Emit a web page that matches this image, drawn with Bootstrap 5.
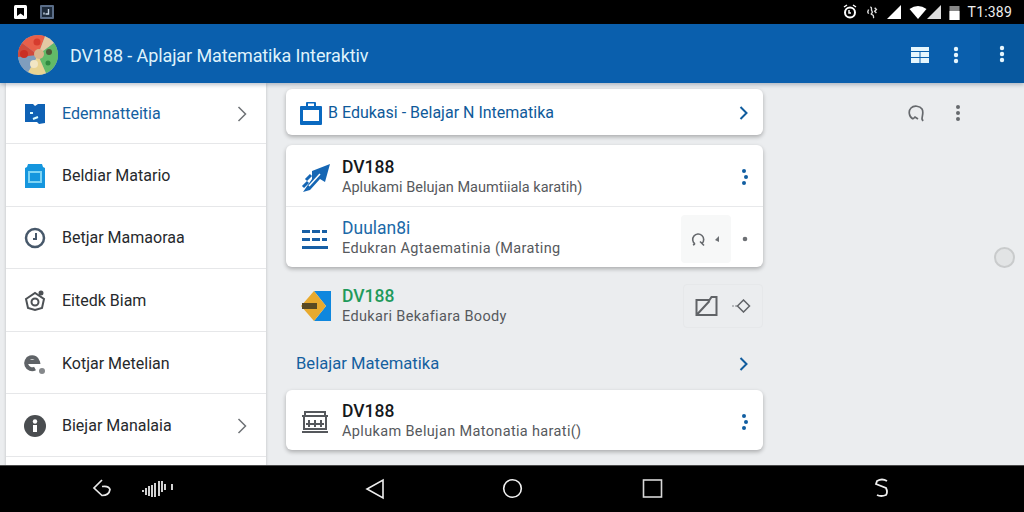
<!DOCTYPE html>
<html lang="en">
<head>
    <meta charset="UTF-8">
    <meta name="viewport" content="width=device-width, initial-scale=1.0">
    <title>DV188</title>
    <link rel="stylesheet" href="https://cdn.jsdelivr.net/npm/bootstrap@5.3.0/dist/css/bootstrap.min.css">
    <script src="https://cdn.jsdelivr.net/npm/bootstrap@5.3.0/dist/js/bootstrap.bundle.min.js"></script>
    <style>
        html, body { height: 100%; }
        body { width: 1024px; height: 512px; overflow: hidden; background: #000; font-family: Roboto, "Liberation Sans", sans-serif; }
        .phone-status { height: 24px; background: #000; padding: 0 12px 0 14px; }
        .status-left { gap: 13px; }
        .status-time { color: #eee; font-size: 14px; line-height: 24px; letter-spacing: .2px; }
        .app-bar { height: 59px; background: #0a5fad; position: relative; z-index: 2; box-shadow: 0 2px 4px rgba(40, 60, 90, .3); }
        .app-title { color: #dff2fb; font-size: 18px; margin-left: 12px; letter-spacing: -.1px; white-space: nowrap; }
        .app-left { padding-left: 18px; padding-top: 3px; }
        .app-tools { gap: 24px; padding-right: 21px; padding-top: 2px; }
        .app-end { width: 44px; background: #07589f; }
        .screen-body { height: 382px; background: #ebedef; overflow: hidden; }
        .side-list { width: 260px; margin-left: 6px; flex: none; border-radius: 0; background: #fff; box-shadow: 0 0 3px rgba(0, 0, 0, .2); align-self: flex-start; }
        .side-list .list-group-item { height: 62.6px; padding: 2px 19px 0 18px; border-color: #e6e7e9; border-left: 0; border-right: 0; color: #26292c; font-size: 16px; display: flex; align-items: center; }
        .side-list .list-group-item:first-child { height: 61px; border-top: 0; border-radius: 0; color: #14609f; }
        .side-icon { width: 24px; height: 24px; margin-left: -1px; margin-right: 15px; flex: none; }
        .side-arrow { margin-left: auto; }
        .main-col { width: 477px; margin-left: 20px; padding-top: 6px; flex: none; }
        .info-card { border: 0; border-radius: 6px; box-shadow: 0 2px 4px rgba(0, 0, 0, .28); }
        .head-card { height: 46px; padding: 2px 15px 0 14px; margin-bottom: 10px; color: #0f5a9a; font-size: 16px; }
        .head-card svg:first-child { margin-right: 6px; }
        .row-item { height: 61px; padding: 3px 15px 0 14px; }
        .row-item + .row-item { border-top: 1px solid #e8e9eb; }
        .row-icon { width: 32px; height: 32px; margin-right: 10px; flex: none; }
        .row-title { font-size: 17.5px; line-height: 19px; color: #15181b; font-weight: 500; }
        .row-sub { font-size: 14.5px; line-height: 19px; margin-top: 1px; color: #56595d; white-space: nowrap; }
        .title-blue { color: #1b69a8; font-weight: 400; }
        .title-green { color: #1f9a5b; }
        .sub-wide { letter-spacing: .35px; }
        .action-box { width: 50px; height: 48px; margin-right: 11px; background: #f7f8f8; border-radius: 4px; gap: 9px; }
        .flat-row { height: 62px; margin-top: 8px; padding: 0 0 0 14px; }
        .flat-actions { width: 80px; height: 44px; border: 1px solid #e6e8ea; border-radius: 4px; gap: 13px; }
        .section-row { height: 32px; margin-top: 11px; padding: 0 15px 0 10px; color: #14609f; font-size: 16.6px; margin-bottom: 10px; }
        .card-last .row-item { height: 60px; }
        .far-col { flex: 1; position: relative; }
        .far-tools { position: absolute; top: 21px; left: 145px; gap: 30px; }
        .edge-knob { position: absolute; top: 164px; left: 231px; width: 21px; height: 21px; border-radius: 50%; background: #e2e4e5; border: 2px solid #c9cbcc; }
        .soft-keys { height: 47px; background: #000; border-top: 1px solid #4a4a4a; position: relative; }
        .soft-key { position: absolute; top: 12px; }
        .key-back { left: 92px; }
        .key-wave { left: 141px; }
        .key-tri { left: 365px; }
        .key-home { left: 502px; }
        .key-recent { left: 642px; }
        .key-swipe { left: 873px; }
    </style>
</head>
<body>

    <!-- status bar -->
    <div class="phone-status d-flex align-items-center justify-content-between">
        <div class="status-left d-flex align-items-center">
            <svg width="13" height="14" viewBox="0 0 13 14"><rect width="13" height="14" rx="1.5" fill="#fff"/><path d="M3 3h7v8L6.500 8.600 3 11z" fill="#000"/></svg>
            <svg width="14" height="14" viewBox="0 0 14 14"><rect width="14" height="14" rx="1" fill="#5a6d88"/><path d="M2 2h10v10H2z" fill="#1d2a3a"/><path d="M8.500 4v5H5.500M4 7.500v2" stroke="#c8d6e6" stroke-width="1.400" fill="none"/></svg>
        </div>
        <div class="d-flex align-items-center">
            <svg width="16" height="16" viewBox="0 0 16 16" fill="none" stroke="#fff" stroke-width="2"><circle cx="8" cy="8.500" r="5"/><path d="M2 3l3-2M14 3l-3-2M7 6v3h2" stroke-width="1.500"/></svg>
            <svg class="ms-2" width="13" height="15" viewBox="0 0 15 15" fill="none" stroke="#ddd" stroke-width="1.600"><path d="M5 1c3 1 0 3 2 5s-3 3 0 4 1 3 2 4M10 2l2 2-2 2 2 2M3 4l-1 3 1 2"/></svg>
            <svg class="ms-2" width="14" height="14" viewBox="0 0 14 14"><path d="M14 0v14H0z" fill="#fff"/></svg>
            <svg class="ms-2" width="18" height="13" viewBox="0 0 17 13"><path d="M0 3q8.500-6 17 0L8.500 13z" fill="#fff"/></svg>
            <svg width="14" height="14" viewBox="0 0 14 14"><path d="M14 0v14H0z" fill="#ddd"/></svg>
            <svg class="ms-2" width="11" height="15" viewBox="0 0 10 15"><path d="M0 1h10v14H0z" fill="#888"/><path d="M0 6h10v9H0z" fill="#fff"/></svg>
            <span class="status-time ms-2">T1:389</span>
        </div>
    </div>

    <!-- app bar -->
    <div class="app-bar d-flex align-items-center">
        <div class="app-left d-flex align-items-center flex-grow-1">
            <svg width="40" height="40" viewBox="0 0 40 40">
                <circle cx="20" cy="20" r="20" fill="#8fa6bf"/>
                <path d="M20 20L4 8A20 20 0 0 1 27 1.300z" fill="#e8604a"/>
                <path d="M20 20L27 1.300A20 20 0 0 1 36 8z" fill="#e3c9a4"/>
                <path d="M20 20L36 8A20 20 0 0 1 28 38.300z" fill="#62ba68"/>
                <path d="M20 20L28 38.300A20 20 0 0 1 10 37z" fill="#e9d492"/>
                <path d="M20 20L10 37A20 20 0 0 1 0 22z" fill="#7f9dbd"/>
                <path d="M20 20L0 22A20 20 0 0 1 4 8z" fill="#cf4a3c"/>
                <circle cx="21" cy="19" r="5" fill="#d9b58c"/>
                <circle cx="6" cy="19" r="4" fill="#c92f25"/>
                <circle cx="19" cy="7" r="3.500" fill="#d63c2e"/>
                <circle cx="31" cy="17" r="3" fill="#4c5a38"/>
                <circle cx="16" cy="29" r="4" fill="#f2e6c4"/>
                <circle cx="30" cy="28" r="2.500" fill="#2f8a40"/>
            </svg>
            <span class="app-title">DV188 - Aplajar Matematika Interaktiv</span>
        </div>
        <div class="app-tools d-flex align-items-center">
            <svg width="18" height="16" viewBox="0 0 18 16" fill="#e6f6fd"><path d="M0 0h18v4H0zM0 5h8.500v5H0zM9.500 5H18v5H9.500zM0 11h8.500v5H0zM9.500 11H18v5H9.500z"/></svg>
            <svg width="6" height="18" viewBox="0 0 6 18" fill="#e6f6fd"><circle cx="3" cy="3" r="2.200"/><circle cx="3" cy="9" r="2.200"/><circle cx="3" cy="15" r="2.200"/></svg>
        </div>
        <div class="app-end h-100 d-flex align-items-center justify-content-center">
            <svg width="6" height="18" viewBox="0 0 6 18" fill="#e6f6fd"><circle cx="3" cy="3" r="2.200"/><circle cx="3" cy="9" r="2.200"/><circle cx="3" cy="15" r="2.200"/></svg>
        </div>
    </div>

    <div class="screen-body d-flex">
        <!-- side menu -->
        <div class="side-list list-group">
            <div class="list-group-item">
                <svg class="side-icon" viewBox="0 0 24 24"><path d="M2 2h8l2 2 3-2h7v19l-6 1-2-2H2z" fill="#0f62b5"/><path d="M7 11h3M10 17l5-2" stroke="#dff" stroke-width="2" fill="none"/></svg>
                <span>Edemnatteitia</span>
                <svg class="side-arrow" width="10" height="16" viewBox="0 0 10 16" fill="none" stroke="#6e7276" stroke-width="1.500"><path d="M1.500 1l7 7-7 7"/></svg>
            </div>
            <div class="list-group-item">
                <svg class="side-icon" viewBox="0 0 24 24"><path d="M5 0h14l1 3 2 1v20H2V4l2-1z" fill="#1596de"/><rect x="5" y="7" width="14" height="12" fill="#7ed4f4"/><rect x="7" y="9" width="10" height="8" fill="#1596de"/></svg>
                <span>Beldiar Matario</span>
            </div>
            <div class="list-group-item">
                <svg class="side-icon" viewBox="0 0 24 24" fill="none" stroke="#47586a" stroke-width="2.500"><circle cx="12" cy="12" r="9"/><path d="M13 7v6h-3" stroke-width="2"/></svg>
                <span>Betjar Mamaoraa</span>
            </div>
            <div class="list-group-item">
                <svg class="side-icon" viewBox="0 0 24 24" fill="none" stroke="#4d5155" stroke-width="2"><path d="M3 10l9-6 9 6-2 9-7 2-7-2z"/><circle cx="12" cy="13" r="3.500"/><circle cx="18" cy="4" r="1.500" fill="#4d5155"/></svg>
                <span>Eitedk Biam</span>
            </div>
            <div class="list-group-item">
                <svg class="side-icon" viewBox="0 0 24 24" fill="none" stroke="#5f6367" stroke-width="4"><path d="M4 10h11a6 6 0 1 0-3 6.500"/><circle cx="19" cy="19" r="3" fill="#85888b" stroke="none"/></svg>
                <span>Kotjar Metelian</span>
            </div>
            <div class="list-group-item">
                <svg class="side-icon" viewBox="0 0 24 24"><circle cx="12" cy="12" r="11" fill="#4a4d50"/><circle cx="12" cy="7.500" r="2.200" fill="#fff"/><path d="M10 11h4v7h-4z" fill="#fff"/></svg>
                <span>Biejar Manalaia</span>
                <svg class="side-arrow" width="10" height="16" viewBox="0 0 10 16" fill="none" stroke="#6e7276" stroke-width="1.500"><path d="M1.500 1l7 7-7 7"/></svg>
            </div>
            <div class="list-group-item"></div>
        </div>

        <!-- cards -->
        <div class="main-col">
            <div class="card info-card head-card flex-row align-items-center justify-content-between">
                <div class="d-flex align-items-center">
                    <svg width="22" height="24" viewBox="0 0 22 24"><path d="M0 6q0-1 1-1h5V2q0-1 1-1h8q1 0 1 1v3h5q1 0 1 1v17q0 1-1 1H1q-1 0-1-1z" fill="#0a69c0"/><path d="M3 9h16v11H3zM8 2.500h6V5H8z" fill="#fff"/></svg>
                    <span>B Edukasi - Belajar N Intematika</span>
                </div>
                <svg width="9" height="14" viewBox="0 0 9 14" fill="none" stroke="#105c9e" stroke-width="2"><path d="M1.500 1l6 6-6 6"/></svg>
            </div>

            <div class="card info-card">
                <div class="row-item d-flex align-items-center">
                    <svg class="row-icon" viewBox="0 0 32 32"><path d="M12 10L30 3l-5 18-5-3-10 11-7 2 9-13z" fill="#1566b4"/><path d="M6 19l5-5M3 26l5-5" stroke="#1566b4" stroke-width="3"/><path d="M9 25l11-12" stroke="#fff" stroke-width="1.500"/></svg>
                    <div class="flex-grow-1">
                        <div class="row-title">DV188</div>
                        <div class="row-sub">Aplukami Belujan Maumtiiala karatih)</div>
                    </div>
                    <svg width="6" height="16" viewBox="0 0 6 16" fill="#115ea1"><circle cx="2" cy="2" r="2"/><circle cx="4" cy="8" r="2"/><circle cx="2" cy="14" r="2"/></svg>
                </div>
                <div class="row-item d-flex align-items-center">
                    <svg class="row-icon" viewBox="0 0 32 32" fill="#175fa5"><path d="M1 6h8v3H1zM11 6h8v3h-8zM21 6h5v3h-5zM1 14h8v3H1zM11 14h8v3h-8zM21 14h5v3h-5zM1 22h26v3H1z" transform="translate(1 1)"/></svg>
                    <div class="flex-grow-1">
                        <div class="row-title title-blue">Duulan8i</div>
                        <div class="row-sub sub-wide">Edukran Agtaematinia (Marating</div>
                    </div>
                    <div class="action-box d-flex align-items-center justify-content-center">
                        <svg width="15" height="16" viewBox="0 0 15 16" fill="none" stroke="#66696d" stroke-width="1.600"><path d="M4 13A5.500 5.500 0 1 1 11 12.500L9 10.500M4 13l-2 1M11 12.500l2 2"/></svg>
                        <svg width="6" height="6" viewBox="0 0 6 6"><path d="M0 4l4-4v6z" fill="#6d7074"/></svg>
                    </div>
                    <svg width="6" height="6" viewBox="0 0 6 6"><circle cx="3" cy="3" r="2.300" fill="#6d7074"/></svg>
                </div>
            </div>

            <div class="flat-row d-flex align-items-center">
                <svg class="row-icon" viewBox="0 0 32 32"><path d="M14 1h17v30H14l12-15z" fill="#0f87de"/><path d="M14 1L1 16l13 15 12-15z" fill="#e8aa2e"/><path d="M2 13h15v6H2z" fill="#5a4a22"/></svg>
                <div class="flex-grow-1">
                    <div class="row-title title-green">DV188</div>
                    <div class="row-sub sub-wide">Edukari Bekafiara Boody</div>
                </div>
                <div class="flat-actions d-flex align-items-center justify-content-center">
                    <svg width="23" height="20" viewBox="0 0 22 20" fill="none" stroke="#606367" stroke-width="2"><path d="M1 4h13l2-3h5v18H1zM2 18L14 5"/></svg>
                    <svg width="20" height="14" viewBox="0 0 19 14" fill="none" stroke="#606367" stroke-width="1.500"><path d="M6 7l6-6 6 6-6 6zM1 7h1M4 7h1"/></svg>
                </div>
            </div>

            <div class="section-row d-flex align-items-center justify-content-between">
                <span>Belajar Matematika</span>
                <svg width="9" height="14" viewBox="0 0 9 14" fill="none" stroke="#105c9e" stroke-width="2"><path d="M1.500 1l6 6-6 6"/></svg>
            </div>

            <div class="card info-card card-last">
                <div class="row-item d-flex align-items-center">
                    <svg class="row-icon" viewBox="0 0 32 32" fill="none" stroke="#55585c" stroke-width="2"><path d="M2 10h26M5 10V6h20v4M4 10v13h22V10M2 26h26M9 14v7M15 14v7M21 14v7M6 18h18"/></svg>
                    <div class="flex-grow-1">
                        <div class="row-title">DV188</div>
                        <div class="row-sub sub-wide">Aplukam Belujan Matonatia harati()</div>
                    </div>
                    <svg width="6" height="16" viewBox="0 0 6 16" fill="#115ea1"><circle cx="2" cy="2" r="2"/><circle cx="4" cy="8" r="2"/><circle cx="2" cy="14" r="2"/></svg>
                </div>
            </div>
        </div>

        <!-- right edge -->
        <div class="far-col">
            <div class="far-tools d-flex align-items-center">
                <svg width="17" height="17" viewBox="0 0 17 17" fill="none" stroke="#66696d" stroke-width="1.700"><path d="M5 14C1 12 0 6 3 3s9-2 11 1 0 7 0 10l1 2M5 14l2-2 3 2"/></svg>
                <svg width="6" height="18" viewBox="0 0 6 18" fill="#66696d"><circle cx="3" cy="3" r="2"/><circle cx="3" cy="9" r="2"/><circle cx="3" cy="15" r="2"/></svg>
            </div>
            <div class="edge-knob"></div>
        </div>
    </div>

    <!-- soft keys -->
    <div class="soft-keys">
        <svg class="soft-key key-back" width="21" height="21" viewBox="0 0 21 21" fill="none" stroke="#e8e8e8" stroke-width="1.700"><path d="M10 2L2 10l8 7.500q7 0 8-6-1-4-8-3"/></svg>
        <svg class="soft-key key-wave" width="33" height="22" viewBox="0 0 33 22" fill="none" stroke="#e8e8e8" stroke-width="1.800"><path d="M2 12v2M5 10v7M8 8v10M11 7v12M14 5v14M18 3v15M21 3v11M24 6v6M31 6v6"/></svg>
        <svg class="soft-key key-tri" width="20" height="22" viewBox="0 0 20 22" fill="none" stroke="#efefef" stroke-width="1.600"><path d="M18 2v18L2 11z"/></svg>
        <svg class="soft-key key-home" width="21" height="21" viewBox="0 0 21 21" fill="none" stroke="#f2f2f2" stroke-width="1.600"><circle cx="10.500" cy="10.500" r="8.800"/></svg>
        <svg class="soft-key key-recent" width="21" height="21" viewBox="0 0 21 21" fill="none" stroke="#d8d8d8" stroke-width="1.600"><rect x="1.500" y="2" width="18" height="17"/></svg>
        <svg class="soft-key key-swipe" width="17" height="21" viewBox="0 0 17 21" fill="none" stroke="#eee" stroke-width="1.800"><path d="M14 3Q9 0 4 3L3 6l10 4q2 4 0 7-5 2-9 0"/></svg>
    </div>

</body>
</html>
